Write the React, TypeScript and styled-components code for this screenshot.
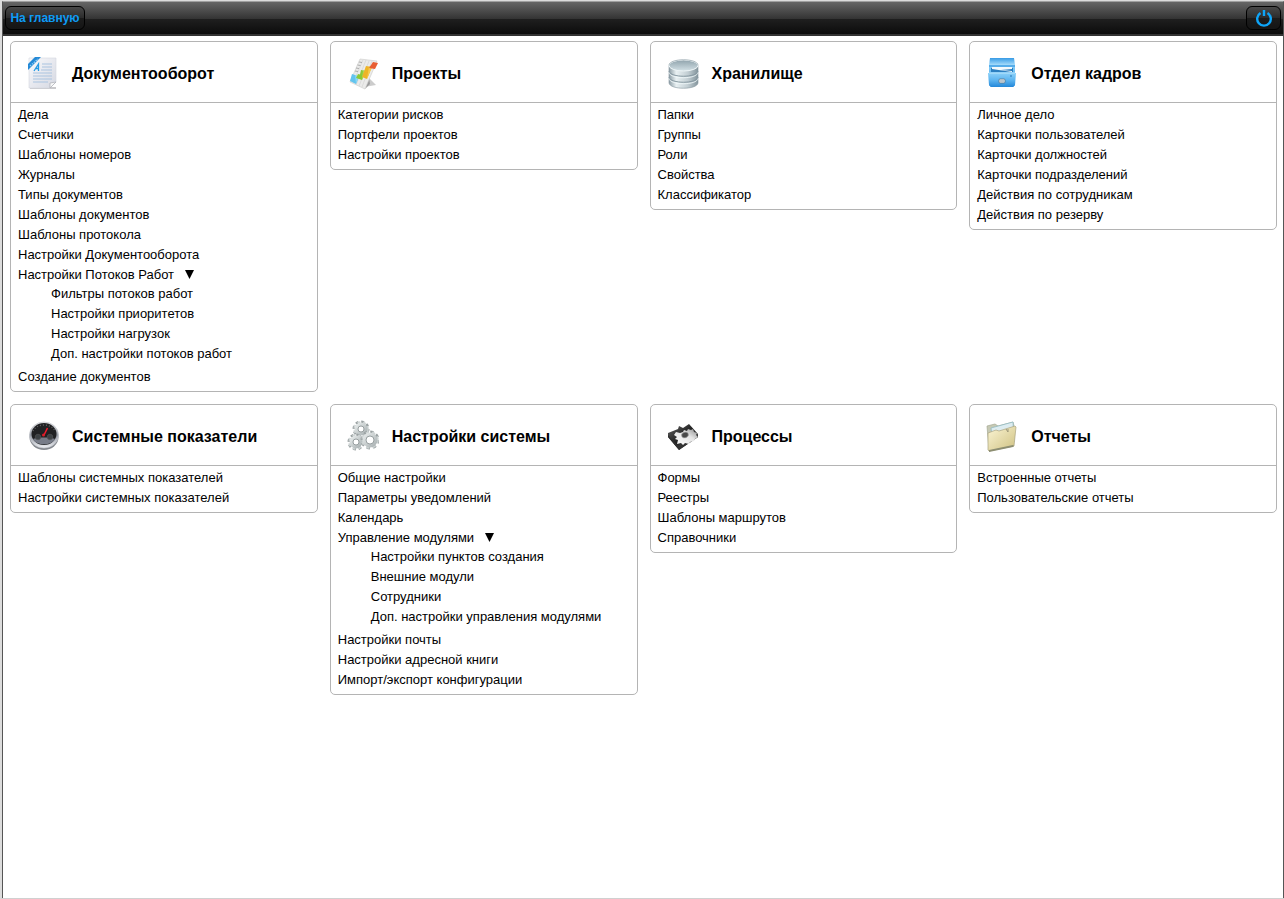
import React from "react";
import styled, { createGlobalStyle } from "styled-components";

const GlobalStyle = createGlobalStyle`
  *, *::before, *::after { box-sizing: border-box; }
  body {
    margin: 0;
    background: #fff;
    color: #000;
    font-family: "Liberation Sans", Arial, sans-serif;
  }
`;

const Frame = styled.div`
  display: flex;
  flex-direction: column;
  min-height: 100vh;
  border-left: 2px solid #dcdcdc;
  border-top: 1px solid #dcdcdc;
  border-bottom: 1px solid #d0d0d0;
`;

const Page = styled.div`
  flex: 1;
  border: 1px solid #555;
  border-top-color: #a0a0a0;
  border-bottom: 0;
`;

const TopBar = styled.header`
  display: flex;
  justify-content: space-between;
  align-items: center;
  height: 34px;
  padding: 0 2px;
  background: linear-gradient(#666 0, #333 50%, #1f1f1f 50%, #0c0c0c 94%, #333 94%);
`;

const BarButton = styled.button<{ $wide?: boolean }>`
  display: flex;
  align-items: center;
  justify-content: center;
  width: ${(p) => (p.$wide ? 80 : 35)}px;
  height: 24px;
  margin-bottom: 2px;
  padding: 0;
  border: 1px solid #000;
  border-radius: 6px;
  background: linear-gradient(#484848, #2b2b2b 50%, #1c1c1c 50%, #151515);
  color: #0e9bf5;
  font: bold 12px "Liberation Sans", Arial, sans-serif;
  white-space: nowrap;
  cursor: pointer;
`;

const Grid = styled.main`
  display: grid;
  grid-template-columns: repeat(4, minmax(0, 1fr));
  align-items: start;
  gap: 12px;
  padding: 5px 6px 5px 7px;
`;

const Card = styled.section`
  border: 1px solid #b4b4b4;
  border-radius: 5px;
`;

const CardHeader = styled.div`
  display: flex;
  align-items: center;
  gap: 13px;
  height: 61px;
  padding: 2px 16px 0;
  border-bottom: 1px solid #b4b4b4;
`;

const CardTitle = styled.h2`
  margin: 2px 0 0;
  font-size: 16px;
  line-height: 20px;
  white-space: nowrap;
`;

const Links = styled.ul`
  margin: 0;
  padding: 2px 7px 4px;
  list-style: none;
  font-size: 13px;
  line-height: 20px;
`;

const SubLinks = styled.ul`
  margin: -1px 0 3px;
  padding: 0 0 0 33px;
  list-style: none;
`;

const ItemLink = styled.a`
  display: inline-block;
  height: 20px;
  vertical-align: top;
  color: #000;
  text-decoration: none;
  white-space: nowrap;
`;

const Arrow = styled.svg`
  width: 9px;
  height: 9px;
  margin: 5px 0 0 11px;
  vertical-align: top;
`;

const Picture = styled.svg`
  flex: none;
  width: 32px;
  height: 34px;
`;

function DocumentIcon() {
  return (
    <Picture viewBox="0 0 32 34" aria-hidden="true">
      <defs>
        <linearGradient id="paper" x1="0" y1="0" x2="1" y2="1">
          <stop offset="0" stopColor="#fafafc" />
          <stop offset="1" stopColor="#d5d8e2" />
        </linearGradient>
      </defs>
      <path d="M3 32h26" stroke="#b9b9bd" strokeWidth="1.5" />
      <path d="M2 2h27v24l-6 6H2z" fill="url(#paper)" stroke="#d5d7df" strokeWidth=".6" />
      <path d="M29 26l-6 6v-5z" fill="#f8f8f8" stroke="#aaadb4" strokeWidth=".7" />
      <path d="M15 8h10M15 11h10M14 14h11M6 17h19M6 20h19M6 23h19M6 26h15" stroke="#a9c3e0" strokeWidth="1.2" />
      <path d="M7 15L11.500 8v7M9 12.500h2" stroke="#239ae4" strokeWidth="1.3" fill="none" />
      <path d="M1 14V8l7-7h6z" fill="#2489d6" />
      <path d="M3 10l8-7" stroke="#8fd0f6" strokeWidth="1.3" strokeDasharray="1.5 1" />
    </Picture>
  );
}

function ChartIcon() {
  return (
    <Picture viewBox="0 0 32 34" aria-hidden="true">
      <path d="M17 31l12-2-7-7z" fill="#999" opacity=".5" />
      <path d="M22 22l-4 11 5-5z" fill="#9a9a9a" />
      <path d="M13 3l17 2-12 28L3 26z" fill="#ebebea" stroke="#cbcbca" strokeWidth=".6" />
      <path d="M16 4L6 27M19 4L9 29M22 5L12 30M25 5L15 31" stroke="#d4d4d3" strokeWidth=".7" />
      <path d="M5 18l3 1 4 2-3 7-6-3z" fill="#62c4ee" />
      <path d="M8 19l4 1.500-3 7" fill="#8ad8f6" />
      <path d="M14 14l5 1-4 9-6-2 2-4 2 .500z" fill="#8cc936" />
      <path d="M16 14.500l3 .500-4 9" fill="#a9da59" />
      <path d="M19 10l6 1-5 12-5-2z" fill="#eeb426" />
      <path d="M22 10.500l3 .500-5 12" fill="#f6cc50" />
      <path d="M26 6l5 1-3 6-6-1z" fill="#e85e33" />
      <path d="M12 6l3 .5M10.500 9l3 .5M9 12l3 .5M8 15l3 .5" stroke="#a5a5a5" strokeWidth=".9" />
    </Picture>
  );
}

function DatabaseIcon() {
  return (
    <Picture viewBox="0 -1 32 34" aria-hidden="true">
      <defs>
        <linearGradient id="metal" x1="0" x2="1">
          <stop offset="0" stopColor="#8d9da5" />
          <stop offset=".25" stopColor="#e8f0f2" />
          <stop offset=".65" stopColor="#c2ced3" />
          <stop offset="1" stopColor="#84949c" />
        </linearGradient>
        <linearGradient id="lid" x1="0" y1="0" x2="0" y2="1">
          <stop offset="0" stopColor="#90a3ac" />
          <stop offset="1" stopColor="#d3e1e6" />
        </linearGradient>
      </defs>
      <path d="M2 8v18c1 7 28 7 29 0V8z" fill="url(#metal)" stroke="#85959d" strokeWidth=".6" />
      <path d="M2 14c1 7 28 7 29 0M2 20c1 7 28 7 29 0" fill="none" stroke="#8799a2" strokeWidth="1" />
      <path d="M2 15.500c1 7 28 7 29 0M2 21.500c1 7 28 7 29 0" fill="none" stroke="#f3fafb" strokeWidth=".8" />
      <ellipse cx="16.500" cy="8.500" rx="14.500" ry="5.500" fill="url(#lid)" stroke="#eef5f7" />
      <path d="M2 8C3 1 30 1 31 8" fill="none" stroke="#91a1a8" strokeWidth=".7" />
    </Picture>
  );
}

function CabinetIcon() {
  return (
    <Picture viewBox="0 0 32 34" aria-hidden="true">
      <defs>
        <linearGradient id="box" x1="0" y1="0" x2="0" y2="1">
          <stop offset="0" stopColor="#8bd0f8" />
          <stop offset=".5" stopColor="#5db5f0" />
          <stop offset="1" stopColor="#2387d9" />
        </linearGradient>
        <linearGradient id="boxTop" x1="0" y1="0" x2="0" y2="1">
          <stop offset="0" stopColor="#379be5" />
          <stop offset="1" stopColor="#a6dcfb" />
        </linearGradient>
      </defs>
      <path d="M4 2h24l1 7H3z" fill="url(#boxTop)" />
      <path d="M3 9h26v20l-2 2H5l-2-2z" fill="url(#box)" />
      <path d="M3 9h26v2H3z" fill="#56adea" />
      <path d="M5 12h22v4H5z" fill="#2b7fc0" />
      <path d="M6 11h20v2l-11 1 11 1v1L6 13z" fill="#f4f9fc" />
      <path d="M2 17h28l-1 12-2 2H5l-2-2z" fill="url(#box)" />
      <path d="M3 17h26" stroke="#b7e3fb" />
      <rect x="13" y="23" width="6" height="4" rx="1" fill="#e9eef1" stroke="#54738a" strokeWidth=".8" />
      <path d="M14 25h4" stroke="#8b9caa" />
      <path d="M24 20h2" stroke="#2877b2" />
    </Picture>
  );
}

function GaugeIcon() {
  return (
    <Picture viewBox="0 0 32 34" aria-hidden="true">
      <defs>
        <linearGradient id="rim" x1="0" y1="0" x2="0" y2="1">
          <stop offset="0" stopColor="#ededee" />
          <stop offset=".5" stopColor="#9398a2" />
          <stop offset="1" stopColor="#eef0f4" />
        </linearGradient>
      </defs>
      <ellipse cx="17" cy="18" rx="14.500" ry="13" fill="#85898f" />
      <ellipse cx="17" cy="16" rx="14.500" ry="13" fill="url(#rim)" stroke="#c3c6cb" strokeWidth=".7" />
      <ellipse cx="17" cy="15" rx="12.500" ry="11" fill="#202123" />
      <path d="M6 20c5-2 17-2 22 0-3 7-19 7-22 0z" fill="#777c88" />
      <path d="M6 12c4-8 18-8 22 0" fill="none" stroke="#666" strokeWidth="1.300" strokeDasharray="1 2" />
      <circle cx="11" cy="18" r="2.800" fill="#3c4144" stroke="#555" strokeWidth=".6" />
      <circle cx="23" cy="18" r="2.800" fill="#3c4144" stroke="#555" strokeWidth=".6" />
      <path d="M17 16L20.500 9" stroke="#f01b2b" strokeWidth="1.500" />
      <circle cx="16.500" cy="16" r="1.500" fill="#d91d29" />
    </Picture>
  );
}

function Cog({ x, y, r }: { x: number; y: number; r: number }) {
  const ring = 2 * Math.PI * (r + 1);
  const tooth = ring / 16;
  return (
    <g transform={`translate(${x} ${y})`}>
      <circle r={r + 1} fill="none" stroke="#9ba2a3" strokeWidth="3" strokeDasharray={tooth} />
      <circle r={r + 0.6} fill="none" stroke="#cdd3d3" strokeWidth="2.400" strokeDasharray={tooth} />
      <circle r={r - 1.5} fill="none" stroke="url(#cog)" strokeWidth="4" />
      <circle r={r - 3} fill="#fff" stroke="#8e9697" strokeWidth=".9" />
    </g>
  );
}

function CogsIcon() {
  return (
    <Picture viewBox="0 0 32 34" aria-hidden="true">
      <defs>
        <linearGradient id="cog" x1="0" y1="0" x2="1" y2="1">
          <stop offset="0" stopColor="#e4e8e8" />
          <stop offset="1" stopColor="#adb5b6" />
        </linearGradient>
      </defs>
      <Cog x={14} y={10} r={6} />
      <Cog x={9} y={23} r={6} />
      <Cog x={23} y={21} r={7} />
    </Picture>
  );
}

function ProcessIcon() {
  return (
    <Picture viewBox="0 -1 32 34" aria-hidden="true">
      <defs>
        <linearGradient id="plate" x1="0" y1="0" x2="1" y2="1">
          <stop offset="0" stopColor="#666" />
          <stop offset=".5" stopColor="#202020" />
          <stop offset="1" stopColor="#777" />
        </linearGradient>
        <linearGradient id="chrome" x1="0" y1="1" x2="1" y2="0">
          <stop offset="0" stopColor="#fff" />
          <stop offset=".6" stopColor="#e4e4e4" />
          <stop offset="1" stopColor="#888" />
        </linearGradient>
      </defs>
      <path d="M1 13l10-4 1-3 4 2 6-4 9 10v3L12 30 1 17z" fill="url(#plate)" />
      <path d="M1 15l11 12 19-12v2L12 30 1 17z" fill="#303030" />
      <path d="M9 12l4 1 3-1 1-2 3 1 1-2 3 1 2-1 1 3 3 1-1 2 2 2-3 2-1 2-4 1-1 2-4-1-2 2-2-2-4 1 1-4-3-1 2-2-3-2z" fill="url(#chrome)" />
      <ellipse cx="18" cy="15" rx="3.500" ry="2.800" transform="rotate(-20 18 15)" fill="#484848" stroke="#aaa" strokeWidth=".6" />
    </Picture>
  );
}

function FolderIcon() {
  return (
    <Picture viewBox="0 0 32 34" aria-hidden="true">
      <defs>
        <linearGradient id="folder" x1="0" y1="0" x2="1" y2="1">
          <stop offset="0" stopColor="#fbf5d5" />
          <stop offset="1" stopColor="#cfc181" />
        </linearGradient>
      </defs>
      <path d="M1 7l8-2 3 2 15-4 1 4-2 20-23 4z" fill="#c6c9b4" stroke="#a5a994" strokeWidth=".7" />
      <path d="M5 9l22-6 1 20-20 6z" fill="#ddecf0" stroke="#8ab8c2" strokeWidth=".7" />
      <path d="M2 14l8-3 3 1 16-5 1 1-2 19L3 32l-1-1z" fill="url(#folder)" stroke="#aaa37f" strokeWidth=".7" />
      <path d="M3 31l24-5 1 1-1 1L3 33z" fill="#8d8e72" />
      <path d="M20 10l2 3v-3" stroke="#9d9778" fill="none" />
    </Picture>
  );
}

type Item = { text: string; children?: string[] };
type Section = { title: string; icon: React.ReactNode; items: Item[] };

const plain = (...texts: string[]): Item[] => texts.map((text) => ({ text }));

const sections: Section[] = [
  {
    title: "Документооборот",
    icon: <DocumentIcon />,
    items: [
      ...plain("Дела", "Счетчики", "Шаблоны номеров", "Журналы", "Типы документов", "Шаблоны документов", "Шаблоны протокола", "Настройки Документооборота"),
      {
        text: "Настройки Потоков Работ",
        children: ["Фильтры потоков работ", "Настройки приоритетов", "Настройки нагрузок", "Доп. настройки потоков работ"],
      },
      ...plain("Создание документов"),
    ],
  },
  { title: "Проекты", icon: <ChartIcon />, items: plain("Категории рисков", "Портфели проектов", "Настройки проектов") },
  { title: "Хранилище", icon: <DatabaseIcon />, items: plain("Папки", "Группы", "Роли", "Свойства", "Классификатор") },
  {
    title: "Отдел кадров",
    icon: <CabinetIcon />,
    items: plain("Личное дело", "Карточки пользователей", "Карточки должностей", "Карточки подразделений", "Действия по сотрудникам", "Действия по резерву"),
  },
  { title: "Системные показатели", icon: <GaugeIcon />, items: plain("Шаблоны системных показателей", "Настройки системных показателей") },
  {
    title: "Настройки системы",
    icon: <CogsIcon />,
    items: [
      ...plain("Общие настройки", "Параметры уведомлений", "Календарь"),
      {
        text: "Управление модулями",
        children: ["Настройки пунктов создания", "Внешние модули", "Сотрудники", "Доп. настройки управления модулями"],
      },
      ...plain("Настройки почты", "Настройки адресной книги", "Импорт/экспорт конфигурации"),
    ],
  },
  { title: "Процессы", icon: <ProcessIcon />, items: plain("Формы", "Реестры", "Шаблоны маршрутов", "Справочники") },
  { title: "Отчеты", icon: <FolderIcon />, items: plain("Встроенные отчеты", "Пользовательские отчеты") },
];

export default function App() {
  return (
    <>
      <GlobalStyle />
      <Frame>
        <Page>
          <TopBar>
            <BarButton type="button" $wide>На главную</BarButton>
            <BarButton type="button" aria-label="Выход">
              <svg width="18" height="18" viewBox="0 0 18 18" fill="none" stroke="#0ea5f8" strokeWidth="2.400" aria-hidden="true">
                <path d="M5.500 4a6.800 6.800 0 1 0 7 0M9 1v6" />
              </svg>
            </BarButton>
          </TopBar>
          <Grid>
            {sections.map((section) => (
              <Card key={section.title}>
                <CardHeader>
                  {section.icon}
                  <CardTitle>{section.title}</CardTitle>
                </CardHeader>
                <Links>
                  {section.items.map((item) => (
                    <li key={item.text}>
                      <ItemLink href="#">
                        {item.text}
                        {item.children && (
                          <Arrow viewBox="0 0 9 9" aria-hidden="true">
                            <path d="M0 0h9L4.500 9z" />
                          </Arrow>
                        )}
                      </ItemLink>
                      {item.children && (
                        <SubLinks>
                          {item.children.map((child) => (
                            <li key={child}>
                              <ItemLink href="#">{child}</ItemLink>
                            </li>
                          ))}
                        </SubLinks>
                      )}
                    </li>
                  ))}
                </Links>
              </Card>
            ))}
          </Grid>
        </Page>
      </Frame>
    </>
  );
}
